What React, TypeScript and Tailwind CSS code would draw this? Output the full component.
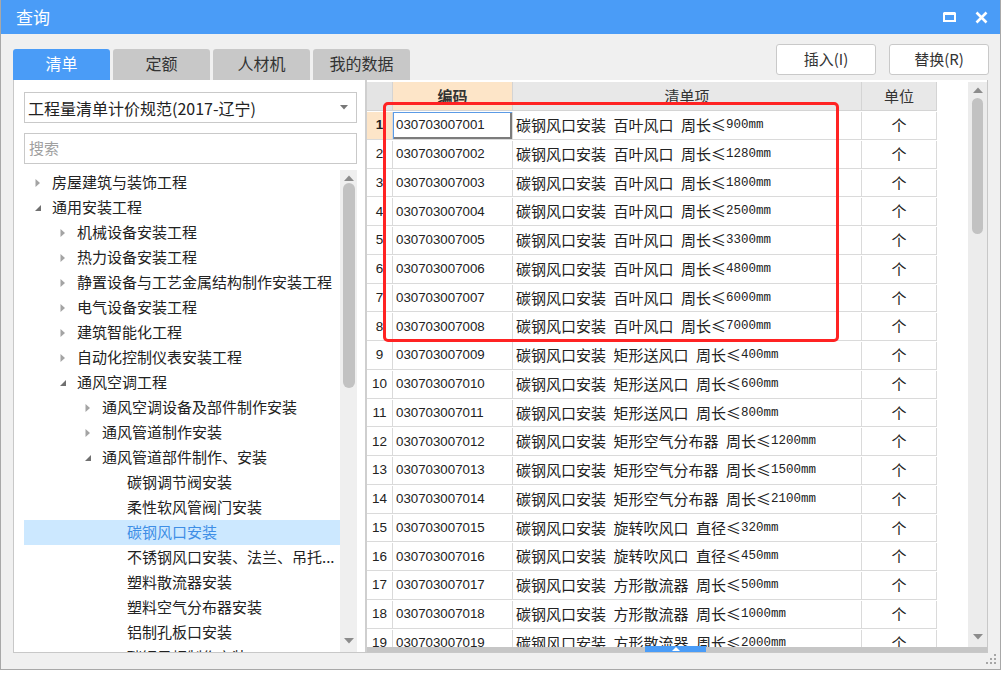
import React from "react";

type TreeNode = {
  label: string;
  level: number;
  state?: "open" | "closed";
  selected?: boolean;
};

interface BillRow {
  code: string;
  kind: string;
  dim: string;
  value: string;
}

const treeNodes: TreeNode[] = [
  { label: "房屋建筑与装饰工程", level: 0, state: "closed" },
  { label: "通用安装工程", level: 0, state: "open" },
  { label: "机械设备安装工程", level: 1, state: "closed" },
  { label: "热力设备安装工程", level: 1, state: "closed" },
  { label: "静置设备与工艺金属结构制作安装工程", level: 1, state: "closed" },
  { label: "电气设备安装工程", level: 1, state: "closed" },
  { label: "建筑智能化工程", level: 1, state: "closed" },
  { label: "自动化控制仪表安装工程", level: 1, state: "closed" },
  { label: "通风空调工程", level: 1, state: "open" },
  { label: "通风空调设备及部件制作安装", level: 2, state: "closed" },
  { label: "通风管道制作安装", level: 2, state: "closed" },
  { label: "通风管道部件制作、安装", level: 2, state: "open" },
  { label: "碳钢调节阀安装", level: 3 },
  { label: "柔性软风管阀门安装", level: 3 },
  { label: "碳钢风口安装", level: 3, selected: true },
  { label: "不锈钢风口安装、法兰、吊托...", level: 3 },
  { label: "塑料散流器安装", level: 3 },
  { label: "塑料空气分布器安装", level: 3 },
  { label: "铝制孔板口安装", level: 3 },
  { label: "碳钢风帽制作安装", level: 3 },
];

// indent per tree level (25px each)
const indents = ["pl-[10px]", "pl-[35px]", "pl-[60px]", "pl-[85px]"];

const rows: BillRow[] = [
  { code: "030703007001", kind: "百叶风口", dim: "周长", value: "900" },
  { code: "030703007002", kind: "百叶风口", dim: "周长", value: "1280" },
  { code: "030703007003", kind: "百叶风口", dim: "周长", value: "1800" },
  { code: "030703007004", kind: "百叶风口", dim: "周长", value: "2500" },
  { code: "030703007005", kind: "百叶风口", dim: "周长", value: "3300" },
  { code: "030703007006", kind: "百叶风口", dim: "周长", value: "4800" },
  { code: "030703007007", kind: "百叶风口", dim: "周长", value: "6000" },
  { code: "030703007008", kind: "百叶风口", dim: "周长", value: "7000" },
  { code: "030703007009", kind: "矩形送风口", dim: "周长", value: "400" },
  { code: "030703007010", kind: "矩形送风口", dim: "周长", value: "600" },
  { code: "030703007011", kind: "矩形送风口", dim: "周长", value: "800" },
  { code: "030703007012", kind: "矩形空气分布器", dim: "周长", value: "1200" },
  { code: "030703007013", kind: "矩形空气分布器", dim: "周长", value: "1500" },
  { code: "030703007014", kind: "矩形空气分布器", dim: "周长", value: "2100" },
  { code: "030703007015", kind: "旋转吹风口", dim: "直径", value: "320" },
  { code: "030703007016", kind: "旋转吹风口", dim: "直径", value: "450" },
  { code: "030703007017", kind: "方形散流器", dim: "周长", value: "500" },
  { code: "030703007018", kind: "方形散流器", dim: "周长", value: "1000" },
  { code: "030703007019", kind: "方形散流器", dim: "周长", value: "2000" },
];

const tabs = ["清单", "定额", "人材机", "我的数据"];

const TreeArrow = ({ state }: { state?: "open" | "closed" }) => {
  if (state === "open") {
    return (
      <svg width="8" height="8" viewBox="0 0 8 8">
        <path d="M7 1 L7 7 L1 7 Z" fill="#707070" />
      </svg>
    );
  }
  if (state === "closed") {
    return (
      <svg width="6" height="10" viewBox="0 0 6 10" className="ml-[1px]">
        <path d="M0.5 1 L5 5 L0.5 9 Z" fill="#a4a4a4" />
      </svg>
    );
  }
  return null;
};

const UpArrow = () => (
  <svg width="10" height="6" viewBox="0 0 10 6">
    <path d="M0 6 L5 0.5 L10 6 Z" fill="#8c8c8c" />
  </svg>
);

const DownArrow = () => (
  <svg width="10" height="6" viewBox="0 0 10 6">
    <path d="M0 0 L10 0 L5 5.5 Z" fill="#8c8c8c" />
  </svg>
);

const App = () => {
  return (
    <div className="w-[1001px] h-[673px] bg-white font-['Noto_Sans_CJK_SC',sans-serif]">
      <div className="h-[670px] flex flex-col bg-[#f0f0f0] border-x border-b border-[#a8a8a8] relative">
        {/* Title bar */}
        <div className="h-[34px] shrink-0 bg-[#4a9cf7] flex items-center justify-between pl-[15px] pr-[12px]">
          <span className="text-white text-[17px]">查询</span>
          <div className="flex items-center gap-[19px]">
            <svg width="13" height="10" viewBox="0 0 13 10">
              <rect x="1" y="1.5" width="11" height="7.5" fill="none" stroke="white" strokeWidth="2" />
              <rect x="1" y="0" width="11" height="3" fill="white" />
            </svg>
            <svg width="13" height="13" viewBox="0 0 13 13">
              <path d="M1.5 1.5 L11.5 11.5 M11.5 1.5 L1.5 11.5" stroke="white" strokeWidth="2.6" />
            </svg>
          </div>
        </div>

        <div className="flex-1 flex flex-col px-[12px] pt-[10px]">
          {/* Tabs + actions */}
          <div className="flex justify-between items-start h-[36px] shrink-0">
            <div className="flex gap-[3px] mt-[5px]">
              {tabs.map((tab, i) => (
                <div
                  key={tab}
                  className={`w-[97px] h-[31px] rounded-t-[3px] flex items-center justify-center text-[16px] pb-[3px] ${
                    i === 0 ? "bg-[#4a9cf7] text-white" : "bg-[#c8c8c8] text-[#333]"
                  }`}
                >
                  {tab}
                </div>
              ))}
            </div>
            <div className="flex gap-[13px] mr-[-1px]">
              <button className="w-[100px] h-[31px] bg-white border border-[#c9c9c9] rounded-[3px] text-[15px] text-[#333]">
                插入(I)
              </button>
              <button className="w-[100px] h-[31px] bg-white border border-[#c9c9c9] rounded-[3px] text-[15px] text-[#333]">
                替换(R)
              </button>
            </div>
          </div>

          {/* Main box */}
          <div className="h-[573px] shrink-0 flex bg-white border-l border-r border-b border-[#c8c8c8]">
            {/* Left panel */}
            <div className="w-[353px] shrink-0 flex flex-col border-r-2 border-[#cfcfcf] pl-[10px]">
              <div className="mt-[12px] w-[333px] h-[31px] border border-[#c9c9c9] flex items-center justify-between pl-[3px] pr-[8px]">
                <span className="text-[16px] text-[#222]">工程量清单计价规范(2017-辽宁)</span>
                <svg width="8" height="5" viewBox="0 0 8 5">
                  <path d="M0 0 L8 0 L4 4.5 Z" fill="#777" />
                </svg>
              </div>
              <div className="mt-[10px] w-[333px] h-[31px] border border-[#c9c9c9] flex items-center pl-[4px]">
                <span className="text-[15px] text-[#a0a0a0]">搜索</span>
              </div>
              <div className="mt-[6px] flex-1 flex overflow-hidden">
                <div className="w-[316px] shrink-0 overflow-hidden">
                  {treeNodes.map((node) => (
                    <div
                      key={node.label}
                      className={`h-[25px] flex items-center ${indents[node.level]} ${
                        node.selected ? "bg-[#cce8ff] text-[#3e8ee6]" : "text-[#222]"
                      }`}
                    >
                      <div className="w-[18px] shrink-0 flex items-center">
                        <TreeArrow state={node.state} />
                      </div>
                      <span className="text-[15px] whitespace-nowrap">{node.label}</span>
                    </div>
                  ))}
                </div>
                {/* tree scrollbar */}
                <div className="w-[17px] shrink-0 bg-[#efefef] flex flex-col items-center">
                  <div className="h-[13px] flex items-center pt-[2px]">
                    <UpArrow />
                  </div>
                  <div className="w-[12px] h-[205px] bg-[#c2c2c2] rounded-full" />
                  <div className="flex-1" />
                  <div className="h-[14px] flex items-start">
                    <DownArrow />
                  </div>
                </div>
              </div>
            </div>

            {/* Table panel */}
            <div className="flex-1 flex flex-col relative">
              <div className="flex-1 flex pt-[2px] overflow-hidden">
                <div className="w-[570px] shrink-0 flex flex-col overflow-hidden">
                  {/* header */}
                  <div className="h-[29px] shrink-0 flex text-[15px] text-[#333]">
                    <div className="w-[26px] shrink-0 bg-[#e4e4e4] border-r border-b border-[#d4d4d4]" />
                    <div className="w-[120px] shrink-0 bg-[#fde5c8] border-r border-b border-[#d4d4d4] flex items-center justify-center font-bold">
                      编码
                    </div>
                    <div className="w-[349px] shrink-0 bg-[#e8e8e8] border-r border-b border-[#d4d4d4] flex items-center justify-center">
                      清单项
                    </div>
                    <div className="w-[75px] shrink-0 bg-[#e8e8e8] border-r border-b border-[#d4d4d4] flex items-center justify-center">
                      单位
                    </div>
                  </div>
                  {/* body */}
                  <div className="flex-1 overflow-hidden">
                    {rows.map((row, i) => (
                      <div key={row.code} className="h-[28.75px] flex text-[#222] pt-[1px]">
                        <div
                          className={`w-[26px] shrink-0 border-r border-b border-[#dadada] flex items-center justify-center text-[13.5px] font-['Liberation_Sans',sans-serif] ${
                            i === 0 ? "bg-[#fde5c8] font-bold" : ""
                          }`}
                        >
                          {i + 1}
                        </div>
                        <div
                          className={`w-[120px] shrink-0 border-r border-b border-[#dadada] flex items-center pl-[3px] text-[13.3px] font-['Liberation_Sans',sans-serif] ${
                            i === 0 ? "shadow-[inset_1px_1px_0_#5b9be6,inset_-2px_-2px_0_#7c7c7c]" : ""
                          }`}
                        >
                          {row.code}
                        </div>
                        <div className="w-[349px] shrink-0 border-r border-b border-[#dadada] flex items-center pl-[3px] text-[15px] whitespace-pre">
                          <span>{`碳钢风口安装\u2002${row.kind}\u2002${row.dim}≤`}</span>
                          <span className="font-['Liberation_Mono',monospace] text-[12.5px]">{`${row.value}mm`}</span>
                        </div>
                        <div className="w-[75px] shrink-0 border-r border-b border-[#dadada] flex items-center justify-center text-[15px]">
                          个
                        </div>
                      </div>
                    ))}
                  </div>
                </div>
                <div className="flex-1" />
                {/* table scrollbar */}
                <div className="w-[19px] shrink-0 bg-[#ececec] flex flex-col items-center">
                  <div className="h-[16px] flex items-center">
                    <UpArrow />
                  </div>
                  <div className="w-[11px] h-[136px] bg-[#c2c2c2] rounded-full" />
                  <div className="flex-1" />
                  <div className="h-[16px] flex items-center pb-[4px]">
                    <DownArrow />
                  </div>
                </div>
              </div>
              {/* horizontal splitter bar */}
              <div className="h-[5px] shrink-0 bg-[#c6c6c6] flex items-end">
                <div className="ml-[278px] w-[61px] h-[6px] bg-[#4a9cf7] flex justify-center items-start pt-[1px]">
                  <svg width="8" height="4" viewBox="0 0 8 4">
                    <path d="M0 4 L4 0 L8 4 Z" fill="white" />
                  </svg>
                </div>
              </div>

              {/* red highlight box */}
              <div className="absolute left-[16px] top-[22px] w-[456px] h-[240px] border-[3px] border-[#ff2323] rounded-[5px] pointer-events-none" />
            </div>
          </div>
        </div>

        {/* resize grip */}
        <svg width="12" height="12" viewBox="0 0 12 12" className="absolute right-[3px] bottom-[4px]">
          <rect x="9" y="1" width="2" height="2" fill="#a6a6a6" />
          <rect x="5" y="5" width="2" height="2" fill="#a6a6a6" />
          <rect x="9" y="5" width="2" height="2" fill="#a6a6a6" />
          <rect x="1" y="9" width="2" height="2" fill="#a6a6a6" />
          <rect x="5" y="9" width="2" height="2" fill="#a6a6a6" />
          <rect x="9" y="9" width="2" height="2" fill="#a6a6a6" />
        </svg>
      </div>
    </div>
  );
};

export default App;
